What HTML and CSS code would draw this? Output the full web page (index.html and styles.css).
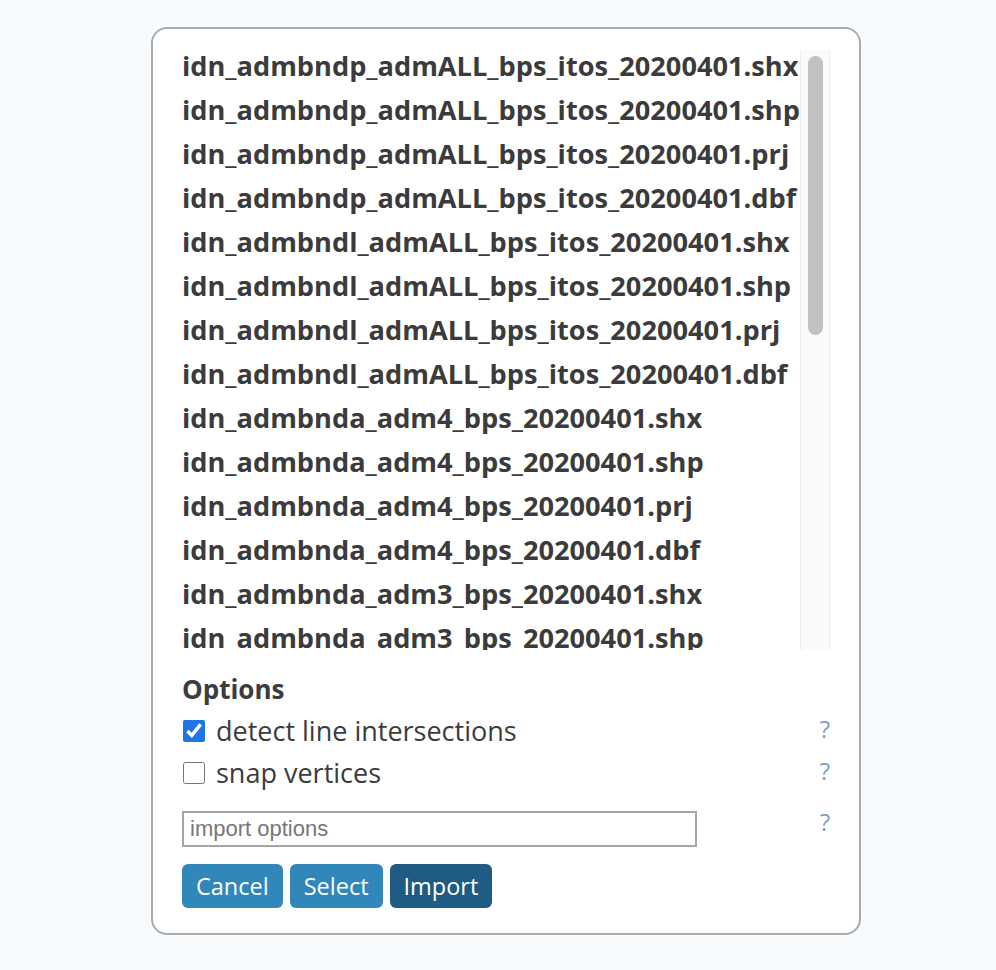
FILE: index.html
```html
<!DOCTYPE html>
<html lang="en">
<head>
<meta charset="utf-8">
<title>Import files</title>
<link rel="stylesheet" href="styles.css">
</head>
<body>
<div class="dialog">
  <div class="list-wrap">
    <div class="file-list">
      <div class="file">idn_admbndp_admALL_bps_itos_20200401.shx</div>
      <div class="file">idn_admbndp_admALL_bps_itos_20200401.shp</div>
      <div class="file">idn_admbndp_admALL_bps_itos_20200401.prj</div>
      <div class="file">idn_admbndp_admALL_bps_itos_20200401.dbf</div>
      <div class="file">idn_admbndl_admALL_bps_itos_20200401.shx</div>
      <div class="file">idn_admbndl_admALL_bps_itos_20200401.shp</div>
      <div class="file">idn_admbndl_admALL_bps_itos_20200401.prj</div>
      <div class="file">idn_admbndl_admALL_bps_itos_20200401.dbf</div>
      <div class="file">idn_admbnda_adm4_bps_20200401.shx</div>
      <div class="file">idn_admbnda_adm4_bps_20200401.shp</div>
      <div class="file">idn_admbnda_adm4_bps_20200401.prj</div>
      <div class="file">idn_admbnda_adm4_bps_20200401.dbf</div>
      <div class="file">idn_admbnda_adm3_bps_20200401.shx</div>
      <div class="file">idn_admbnda_adm3_bps_20200401.shp</div>
    </div>
    <div class="scroll-track"><div class="scroll-thumb"></div></div>
  </div>

  <div class="options">
    <div class="options-title">Options</div>
    <div class="option-row">
      <label class="option"><input type="checkbox" class="check" checked> detect line intersections</label>
      <span class="help">?</span>
    </div>
    <div class="option-row">
      <label class="option"><input type="checkbox" class="check"> snap vertices</label>
      <span class="help">?</span>
    </div>
    <div class="option-row input-row">
      <input type="text" class="text-input" placeholder="import options">
      <span class="help">?</span>
    </div>
  </div>

  <div class="buttons">
    <button class="btn">Cancel</button>
    <button class="btn">Select</button>
    <button class="btn btn-primary">Import</button>
  </div>
</div>
</body>
</html>
```

FILE: styles.css
```css
html, body {
  margin: 0;
  padding: 0;
}

body {
  background: #f7fbfe;
  font-family: "Open Sans", "Noto Sans", sans-serif;
  color: #3c3c3c;
  padding: 27px 0 0 151px;
}

.dialog {
  box-sizing: border-box;
  width: 710px;
  height: 908px;
  background: #fff;
  border: 2px solid #ababab;
  border-radius: 16px;
  padding: 19px 29px 25px 29px;
  display: flex;
  flex-direction: column;
}

.list-wrap {
  display: flex;
  height: 602px;
  flex: none;
}

.file-list {
  flex: 1;
  overflow: hidden;
}

.scroll-track {
  box-sizing: border-box;
  width: 30px;
  flex: none;
  margin-top: 2px;
  background: #fafafa;
  border-left: 1px solid #ececec;
  border-right: 1px solid #ececec;
  padding: 6px 6px 0 7px;
}

.scroll-thumb {
  height: 279px;
  background: #c1c1c1;
  border-radius: 8px;
}

.file {
  font-size: 27.2px;
  font-weight: 700;
  line-height: 36px;
  padding-bottom: 8px;
  white-space: nowrap;
  color: #3b3b3b;
}

.options {
  display: flex;
  flex-direction: column;
}

.options-title {
  font-size: 26px;
  font-weight: 700;
  line-height: 32px;
  margin-top: 23px;
  margin-bottom: 5px;
}

.option-row {
  display: flex;
  align-items: center;
  justify-content: space-between;
  height: 42px;
}

.option {
  display: flex;
  align-items: center;
  gap: 11px;
  font-size: 27px;
  line-height: 34px;
  color: #3c3c3c;
}

.check {
  width: 22px;
  height: 22px;
  margin: 0 0 0 1px;
  accent-color: #1f74e8;
}

.help {
  font-size: 24px;
  color: #7f9fca;
  align-self: flex-start;
  line-height: 28px;
  margin-top: 5px;
}

.input-row {
  margin-top: 17px;
  height: 36px;
}

.input-row .help {
  margin-top: -3px;
}

.text-input {
  box-sizing: border-box;
  width: 515px;
  height: 36px;
  border: 2px solid #a5a5a5;
  padding: 0 6px;
  font-family: "Liberation Sans", Arial, sans-serif;
  font-size: 22px;
  outline: none;
}

.text-input::placeholder {
  color: #777;
}

.buttons {
  display: flex;
  gap: 7px;
  margin-top: 17px;
}

.btn {
  font-family: "Open Sans", "Noto Sans", sans-serif;
  font-size: 23.5px;
  color: #fff;
  background: #3287ba;
  border: none;
  border-radius: 6px;
  height: 44px;
  padding: 0 14px;
}

.btn-primary {
  background: #1f5b82;
}
```
